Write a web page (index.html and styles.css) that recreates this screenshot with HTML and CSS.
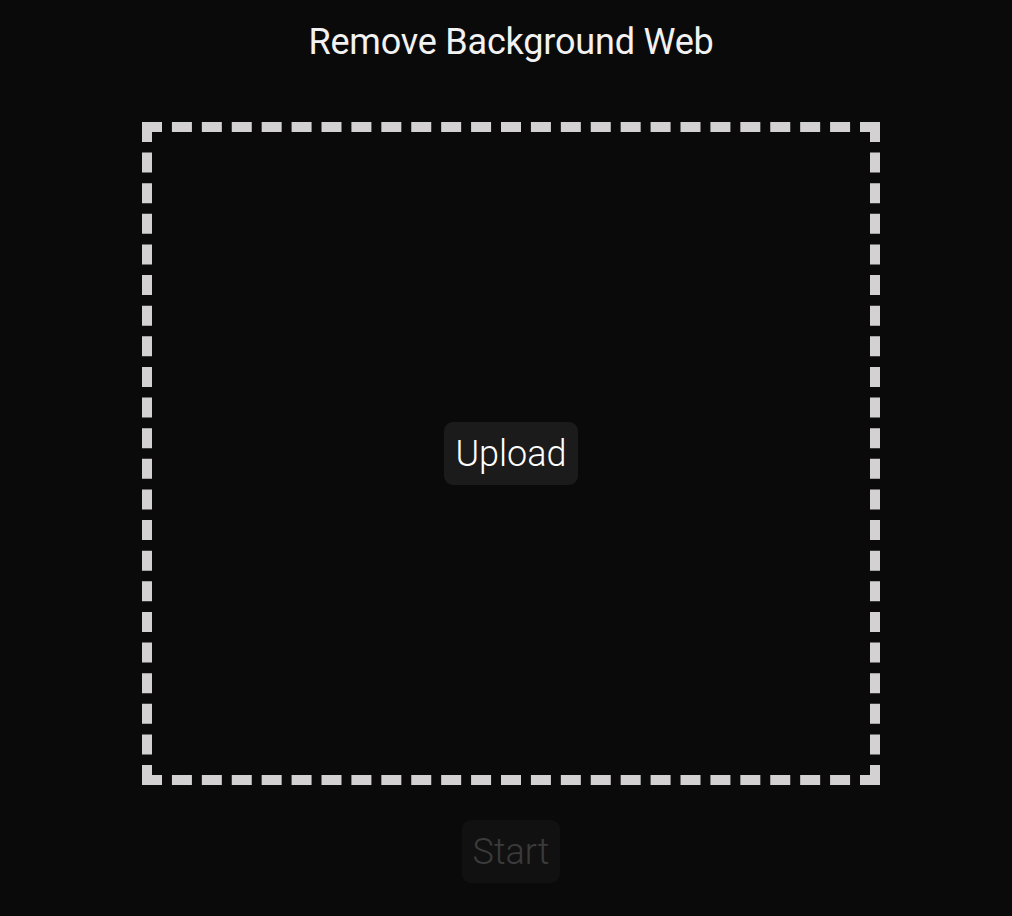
FILE: index.html
```html
<!DOCTYPE html>
<html>
<head>
<meta charset="utf-8">
<link rel="stylesheet" href="styles.css">
</head>
<body>
<main class="app">
  <h1 class="title">Remove Background Web</h1>
  <div class="dropzone">
    <button class="btn upload">Upload</button>
  </div>
  <button class="btn start" disabled>Start</button>
</main>
</body>
</html>
```
FILE: styles.css
```css
html, body {
  margin: 0;
  background: #0a0a0a;
}
.app {
  padding-left: 10px;
  display: flex;
  flex-direction: column;
  align-items: center;
  font-family: Roboto, "Liberation Sans", sans-serif;
  color: #f2f2f2;
}
.title {
  margin: 22px 0 0;
  height: 40px;
  line-height: 40px;
  font-size: 36px;
  font-weight: 400;
  letter-spacing: -0.2px;
}
.dropzone {
  margin-top: 60px;
  box-sizing: border-box;
  width: 738px;
  height: 663px;
  border: 10px dashed #d3d1d1;
  display: flex;
  align-items: center;
  justify-content: center;
}
.btn {
  font-family: Roboto, "Liberation Sans", sans-serif;
  font-weight: 300;
  font-size: 36px;
  border: none;
  border-radius: 9px;
  height: 63px;
  padding: 0 11px;
  cursor: pointer;
}
.upload {
  background: #1c1b1b;
  color: #ffffff;
  margin-top: 0;
}
.start {
  margin-top: 35px;
  background: #111111;
  color: #3b3b3b;
  cursor: default;
}
```
